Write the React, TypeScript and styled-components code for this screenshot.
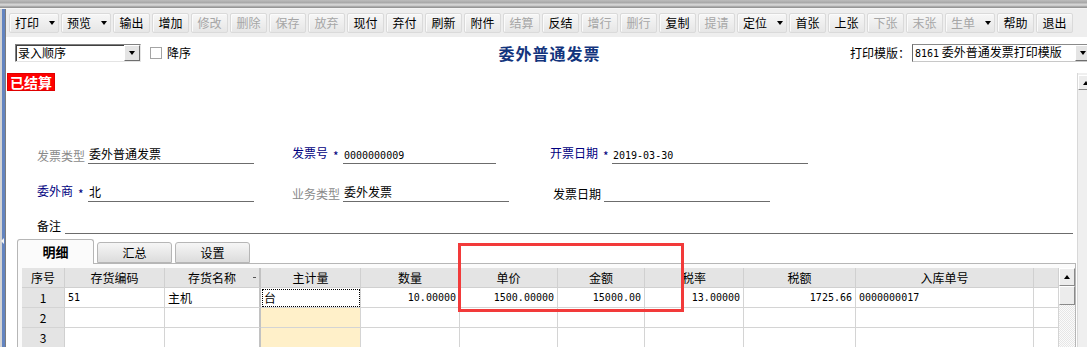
import React from "react";
import styled, { createGlobalStyle } from "styled-components";

const GlobalStyle = createGlobalStyle`
  html, body { margin: 0; padding: 0; background: #fff; }
  body {
    font-family: "Noto Sans CJK SC", "Noto Sans", sans-serif;
    font-size: 12px;
    color: #000;
  }
  * { box-sizing: border-box; }
`;

const Window = styled.div`
  position: relative;
  width: 1087px;
  height: 347px;
  overflow: hidden;
  display: flex;
  flex-direction: column;
  background: #fff;
`;

const TopBand = styled.div`
  height: 9px;
  flex: none;
  background: linear-gradient(
    #bcbcbc 0,
    #a6a6a6 3px,
    #d8d8d8 4px,
    #c6c6c6 6px,
    #8e8e8e 7px,
    #9e9e9e 8px,
    #f4f4f4 8px
  );
`;

const Body = styled.div`
  display: flex;
  flex: 1;
  min-height: 0;
`;

const LeftStrip = styled.div`
  width: 6px;
  flex: none;
  background: linear-gradient(to right, #d4d4d4 0 2px, #6384c0 2px 5px, #7c7c7c 5px 6px);
  padding-top: 229px;
`;

const StripArrow = styled.div`
  width: 0;
  height: 0;
  margin-left: 1px;
  border-top: 3px solid transparent;
  border-bottom: 3px solid transparent;
  border-right: 3px solid #f4f4f4;
`;

const Main = styled.div`
  flex: 1;
  min-width: 0;
  display: flex;
  flex-direction: column;
`;

const Toolbar = styled.div`
  height: 28px;
  flex: none;
  display: flex;
  align-items: center;
  gap: 2px;
  padding-left: 3px;
  background: #eeeeee;
`;

const ToolButton = styled.div<{ $menu?: boolean; $disabled?: boolean }>`
  width: ${(p) => (p.$menu ? 50 : 37)}px;
  height: 20px;
  flex: none;
  display: flex;
  align-items: center;
  justify-content: ${(p) => (p.$menu ? "flex-start" : "center")};
  padding-left: ${(p) => (p.$menu ? 5 : 0)}px;
  gap: 10px;
  border: 1px solid #dadada;
  border-radius: 2px;
  background: linear-gradient(#f7f7f7, #e6e6e6);
  box-shadow: inset 1px 1px 0 #fbfbfb;
  color: ${(p) => (p.$disabled ? "#a6a6a6" : "#000")};
  font-size: 12px;
  line-height: 18px;
  white-space: nowrap;
`;

const DownArrow = styled.span`
  width: 0;
  height: 0;
  border-left: 3.5px solid transparent;
  border-right: 3.5px solid transparent;
  border-top: 4px solid #000;
`;

const UpArrow = styled.span`
  width: 0;
  height: 0;
  border-left: 3.5px solid transparent;
  border-right: 3.5px solid transparent;
  border-bottom: 4px solid #000;
`;

const OptionsRow = styled.div`
  height: 36px;
  flex: none;
  display: grid;
  grid-template-columns: 1fr auto 1fr;
  align-items: center;
  padding: 0 0 4px 9px;
`;

const LeftGroup = styled.div`
  display: flex;
  align-items: center;
`;

const RightGroup = styled.div`
  display: flex;
  align-items: center;
  justify-content: flex-end;
`;

const Combo = styled.div<{ $w: number; $sunken?: boolean }>`
  width: ${(p) => p.$w}px;
  height: 18px;
  flex: none;
  display: flex;
  align-items: center;
  background: #fff;
  border: 1px solid;
  border-color: ${(p) => (p.$sunken ? "#808080 #e4e4e4 #e4e4e4 #808080" : "#8a8a8a #c8c8c8 #c8c8c8 #6a6a6a")};
  box-shadow: ${(p) => (p.$sunken ? "inset 1px 1px 0 #404040" : "none")};
`;

const ComboText = styled.span`
  flex: 1;
  min-width: 0;
  padding-left: 2px;
  line-height: 16px;
  white-space: nowrap;
  overflow: hidden;
`;

const ComboButton = styled.span`
  width: 16px;
  height: 16px;
  flex: none;
  display: flex;
  align-items: center;
  justify-content: center;
  background: #e4e4e4;
  border: 1px solid;
  border-color: #fff #6e6e6e #6e6e6e #fff;
`;

const CheckBox = styled.span`
  width: 12px;
  height: 12px;
  margin-left: 9px;
  border: 1px solid #a4a4a4;
  background: #fff;
`;

const CheckLabel = styled.span`
  margin-left: 5px;
  line-height: 16px;
`;

const Title = styled.div`
  font-size: 16px;
  font-weight: bold;
  letter-spacing: 1px;
  color: #12347d;
  line-height: 18px;
  margin-right: 3px;
`;

const TemplateLabel = styled.span`
  margin-right: 2px;
  line-height: 16px;
`;

const TemplateCombo = styled(Combo)`
  margin-right: -5px;
`;

const Num = styled.span<{ $size?: number }>`
  font-family: "DejaVu Sans Mono", "Liberation Mono", monospace;
  font-size: ${(p) => p.$size ?? 10}px;
`;

const FormBody = styled.div`
  flex: 1;
  min-height: 0;
  display: flex;
`;

const Content = styled.div`
  flex: 1;
  min-width: 0;
  display: flex;
  flex-direction: column;
`;

const OuterScroll = styled.div`
  width: 10px;
  flex: none;
  overflow: hidden;
  padding-top: 2px;
  background: #efefef;
  border-left: 1px solid #d8d8d8;
`;

const ScrollButton = styled.div<{ $h: number }>`
  width: 16px;
  height: ${(p) => p.$h}px;
  flex: none;
  display: flex;
  align-items: center;
  justify-content: center;
  background: #ececec;
  border: 1px solid;
  border-color: #fff #8a8a8a #8a8a8a #fff;
`;

const Badge = styled.div`
  align-self: flex-start;
  margin-left: 1px;
  height: 18px;
  padding: 0 2px;
  background: #ff0000;
  border: 1px solid #e00000;
  color: #fff;
  font-size: 14px;
  font-weight: bold;
  line-height: 16px;
`;

const FieldRow = styled.div<{ $mt: number }>`
  display: flex;
  align-items: flex-end;
  padding-left: 31px;
  margin-top: ${(p) => p.$mt}px;
`;

const Field = styled.div<{ $w?: number }>`
  display: flex;
  align-items: flex-end;
  width: ${(p) => (p.$w ? `${p.$w}px` : "auto")};
  flex: none;
`;

const FieldLabel = styled.span<{ $w: number; $tone: "gray" | "navy" | "black"; $indent?: number }>`
  width: ${(p) => p.$w}px;
  padding-left: ${(p) => p.$indent ?? 0}px;
  flex: none;
  white-space: nowrap;
  line-height: 17px;
  color: ${(p) => (p.$tone === "gray" ? "#8a8a8a" : p.$tone === "navy" ? "#000080" : "#000")};
`;

const Star = styled.span`
  display: inline-block;
  margin-left: 5px;
  font-size: 12px;
  vertical-align: -3px;
`;

const FieldValue = styled.span<{ $w: number }>`
  width: ${(p) => p.$w}px;
  height: 17px;
  flex: none;
  padding-left: 1px;
  border-bottom: 1px solid #6c6c6c;
  line-height: 14px;
  white-space: nowrap;
`;

const TabStrip = styled.div`
  height: 24px;
  flex: none;
  margin-top: 5px;
  padding-left: 11px;
  display: flex;
  align-items: flex-end;
  gap: 3px;
`;

const Tab = styled.div<{ $active?: boolean }>`
  position: relative;
  z-index: ${(p) => (p.$active ? 1 : 0)};
  width: ${(p) => (p.$active ? 77 : 75)}px;
  height: ${(p) => (p.$active ? 25 : 21)}px;
  margin-bottom: ${(p) => (p.$active ? -1 : 0)}px;
  display: flex;
  align-items: center;
  justify-content: center;
  border: 1px solid #b6b6b6;
  border-bottom: ${(p) => (p.$active ? "none" : "1px solid #b6b6b6")};
  border-radius: 3px 3px 0 0;
  background: ${(p) => (p.$active ? "#fbfbfb" : "linear-gradient(#f6f6f6, #dcdcdc)")};
  font-weight: ${(p) => (p.$active ? "bold" : "normal")};
  font-size: ${(p) => (p.$active ? 13 : 12)}px;
  line-height: 16px;
`;

const Panel = styled.div`
  flex: 1;
  min-height: 0;
  margin: 0 1px 0 11px;
  padding: 4px 0 0 4px;
  display: flex;
  border: 1px solid #b6b6b6;
  border-bottom: none;
  background: #fbfbfb;
`;

const Table = styled.div<{ $cols: string }>`
  flex: none;
  display: grid;
  grid-template-columns: ${(p) => p.$cols};
  grid-auto-rows: 20px;
  align-content: start;
  background: #fff;
`;

const HeadCell = styled.div<{ $frozen?: boolean }>`
  position: relative;
  display: flex;
  align-items: center;
  justify-content: center;
  background: #e4e4e4;
  border-right: ${(p) => (p.$frozen ? "2px solid #c2c2c2" : "1px solid #d0d0d0")};
  border-bottom: 1px solid #d0d0d0;
  line-height: 16px;
  white-space: nowrap;
`;

const SortMark = styled.span`
  position: absolute;
  right: 3px;
  top: 9px;
  width: 3px;
  height: 1px;
  background: #555;
`;

const RowHead = styled.div`
  display: flex;
  align-items: center;
  justify-content: center;
  background: #e4e4e4;
  border-right: 1px solid #d0d0d0;
  border-bottom: 1px solid #d4d4d4;
`;

const Cell = styled.div<{ $align: "left" | "right"; $tint?: boolean; $frozen?: boolean; $focus?: boolean }>`
  display: flex;
  align-items: center;
  justify-content: ${(p) => (p.$align === "right" ? "flex-end" : "flex-start")};
  padding: 0 3px;
  background: ${(p) => (p.$tint ? "#fff0c9" : "#fff")};
  border-right: ${(p) => (p.$frozen ? "2px solid #c2c2c2" : "1px solid #d4d4d4")};
  border-bottom: 1px solid #d4d4d4;
  outline: ${(p) => (p.$focus ? "1px dotted #000" : "none")};
  outline-offset: -2px;
  line-height: 16px;
  white-space: nowrap;
  overflow: hidden;
`;

const GridScroll = styled.div`
  width: 16px;
  flex: none;
  display: flex;
  flex-direction: column;
  background: repeating-conic-gradient(#e6e6e6 0 25%, #fbfbfb 0 50%) 0 0 / 2px 2px;
`;

const Annotation = styled.div`
  position: absolute;
  left: 458px;
  top: 243px;
  width: 226px;
  height: 69px;
  border: 3px solid #f23a3a;
  pointer-events: none;
`;

type ToolItem = { label: string; disabled?: boolean; menu?: boolean };

const toolItems: ToolItem[] = [
  { label: "打印", menu: true },
  { label: "预览", menu: true },
  { label: "输出" },
  { label: "增加" },
  { label: "修改", disabled: true },
  { label: "删除", disabled: true },
  { label: "保存", disabled: true },
  { label: "放弃", disabled: true },
  { label: "现付" },
  { label: "弃付" },
  { label: "刷新" },
  { label: "附件" },
  { label: "结算", disabled: true },
  { label: "反结" },
  { label: "增行", disabled: true },
  { label: "删行", disabled: true },
  { label: "复制" },
  { label: "提请", disabled: true },
  { label: "定位", menu: true },
  { label: "首张" },
  { label: "上张" },
  { label: "下张", disabled: true },
  { label: "末张", disabled: true },
  { label: "生单", menu: true, disabled: true },
  { label: "帮助" },
  { label: "退出" },
];

type Col = { key: string; title: string; w: number; num?: boolean; frozen?: boolean; tint?: boolean };

const columns: Col[] = [
  { key: "code", title: "存货编码", w: 100 },
  { key: "name", title: "存货名称", w: 96, frozen: true },
  { key: "unit", title: "主计量", w: 100, tint: true },
  { key: "qty", title: "数量", w: 99, num: true },
  { key: "price", title: "单价", w: 98, num: true },
  { key: "amount", title: "金额", w: 87, num: true },
  { key: "rate", title: "税率", w: 99, num: true },
  { key: "tax", title: "税额", w: 112, num: true },
  { key: "inbound", title: "入库单号", w: 178 },
  { key: "blank", title: "", w: 25 },
];

const rows: Record<string, string>[] = [
  {
    code: "51",
    name: "主机",
    unit: "台",
    qty: "10.00000",
    price: "1500.00000",
    amount: "15000.00",
    rate: "13.00000",
    tax: "1725.66",
    inbound: "0000000017",
  },
  {},
  {},
  {},
];

const VISIBLE_NUMBERED_ROWS = 3;

const isAscii = (s: string) => /^[0-9.\-]+$/.test(s);

export default function App() {
  const cols = `43px ${columns.map((c) => `${c.w}px`).join(" ")}`;
  return (
    <Window>
      <GlobalStyle />
      <TopBand />
      <Body>
        <LeftStrip>
          <StripArrow />
        </LeftStrip>
        <Main>
          <Toolbar>
            {toolItems.map((t) => (
              <ToolButton key={t.label} $menu={t.menu} $disabled={t.disabled}>
                {t.label}
                {t.menu && <DownArrow />}
              </ToolButton>
            ))}
          </Toolbar>
          <OptionsRow>
            <LeftGroup>
              <Combo $w={126} $sunken>
                <ComboText>录入顺序</ComboText>
                <ComboButton>
                  <DownArrow />
                </ComboButton>
              </Combo>
              <CheckBox />
              <CheckLabel>降序</CheckLabel>
            </LeftGroup>
            <Title>委外普通发票</Title>
            <RightGroup>
              <TemplateLabel>打印模版：</TemplateLabel>
              <TemplateCombo $w={180}>
                <ComboText>
                  <Num $size={10}>8161</Num> 委外普通发票打印模版
                </ComboText>
                <ComboButton>
                  <DownArrow />
                </ComboButton>
              </TemplateCombo>
            </RightGroup>
          </OptionsRow>
          <FormBody>
            <Content>
              <Badge>已结算</Badge>
              <FieldRow $mt={53}>
                <Field $w={255}>
                  <FieldLabel $w={51} $tone="gray">发票类型</FieldLabel>
                  <FieldValue $w={166}>委外普通发票</FieldValue>
                </Field>
                <Field $w={258}>
                  <FieldLabel $w={51} $tone="navy">
                    发票号<Star>*</Star>
                  </FieldLabel>
                  <FieldValue $w={153}>
                    <Num>0000000009</Num>
                  </FieldValue>
                </Field>
                <Field>
                  <FieldLabel $w={62} $tone="navy">
                    开票日期<Star>*</Star>
                  </FieldLabel>
                  <FieldValue $w={196}>
                    <Num>2019-03-30</Num>
                  </FieldValue>
                </Field>
              </FieldRow>
              <FieldRow $mt={18}>
                <Field $w={255}>
                  <FieldLabel $w={51} $tone="navy">
                    委外商<Star>*</Star>
                  </FieldLabel>
                  <FieldValue $w={166}>北</FieldValue>
                </Field>
                <Field $w={258}>
                  <FieldLabel $w={51} $tone="gray">业务类型</FieldLabel>
                  <FieldValue $w={166}>委外发票</FieldValue>
                </Field>
                <Field>
                  <FieldLabel $w={54} $indent={3} $tone="black">发票日期</FieldLabel>
                  <FieldValue $w={166} />
                </Field>
              </FieldRow>
              <FieldRow $mt={15}>
                <Field>
                  <FieldLabel $w={28} $tone="black">备注</FieldLabel>
                  <FieldValue $w={1008} />
                </Field>
              </FieldRow>
              <TabStrip>
                <Tab $active>明细</Tab>
                <Tab>汇总</Tab>
                <Tab>设置</Tab>
              </TabStrip>
              <Panel>
                <Table $cols={cols}>
                  <HeadCell>序号</HeadCell>
                  {columns.map((c) => (
                    <HeadCell key={c.key} $frozen={c.frozen}>
                      {c.title}
                      {c.frozen && <SortMark />}
                    </HeadCell>
                  ))}
                  {rows.map((r, i) => (
                    <React.Fragment key={i}>
                      <RowHead>{i < VISIBLE_NUMBERED_ROWS ? i + 1 : ""}</RowHead>
                      {columns.map((c) => {
                        const v = r[c.key] ?? "";
                        return (
                          <Cell
                            key={c.key}
                            $align={c.num ? "right" : "left"}
                            $frozen={c.frozen}
                            $tint={c.tint && i > 0}
                            $focus={c.key === "unit" && i === 0}
                          >
                            {v && isAscii(v) ? <Num>{v}</Num> : v}
                          </Cell>
                        );
                      })}
                    </React.Fragment>
                  ))}
                </Table>
                <GridScroll>
                  <ScrollButton $h={18}>
                    <UpArrow />
                  </ScrollButton>
                  <ScrollButton $h={19} />
                </GridScroll>
              </Panel>
            </Content>
            <OuterScroll>
              <ScrollButton $h={15}>
                <UpArrow />
              </ScrollButton>
            </OuterScroll>
          </FormBody>
        </Main>
      </Body>
      <Annotation />
    </Window>
  );
}
